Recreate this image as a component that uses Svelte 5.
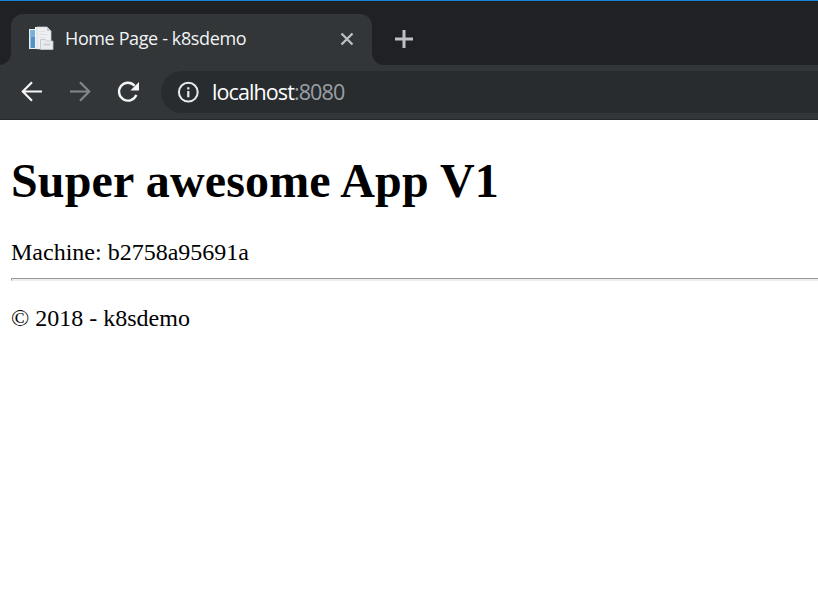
<script>
  const title = 'Home Page - k8sdemo';
  const host = 'localhost';
  const port = ':8080';
</script>

<div class="window">
  <div class="tabstrip">
    <div class="tab">
      <svg class="favicon" width="26" height="26" viewBox="0 0 26 26">
        <path d="M1 3h14v20H1z" fill="#eceef0" />
        <path d="M2.500 4h4.500v18H2.500z" fill="#4f93c8" />
        <path d="M2.500 4h4.500v7H2.500z" fill="#78b0d8" />
        <path d="M7 1h12v21H7z" fill="#f4f5f6" />
        <path d="M9 1h10l4 4v18H9z" fill="#eeeff2" stroke="#d0d3d8" stroke-width=".7" />
        <path d="M19 1v4h4z" fill="#c4c8ce" />
        <path d="M11 5.500h6M11 8.500h9M11 11.500h6" stroke="#dfe1e7" fill="none" />
        <path d="M12.500 13.500h5l1 1.500h6.500v8.500H12.500z" fill="#e9ebee" stroke="#bfc3c9" stroke-width=".8" />
        <path d="M15.500 18.500h7" stroke="#c7ccd4" stroke-width="1.6" />
      </svg>
      <span class="title">{title}</span>
      <svg class="close" width="14" height="14" viewBox="0 0 14 14">
        <path d="M1.500 1.500l11 11M12.500 1.500l-11 11" stroke="#bdc1c6" stroke-width="2.300" />
      </svg>
    </div>
    <svg class="new-tab" width="20" height="20" viewBox="0 0 20 20">
      <path d="M10 1v18M1 10h18" stroke="#bdc1c6" stroke-width="3" />
    </svg>
  </div>

  <div class="toolbar">
    <svg width="22" height="22" viewBox="0 0 22 22">
      <path d="M21 10.500H2.500M11 1.300L1.800 10.500l9.200 9.200" stroke="#f5f5f5" stroke-width="2.200" fill="none" />
    </svg>
    <svg width="22" height="22" viewBox="0 0 22 22">
      <path d="M1 10.500h18.500M11 1.300l9.200 9.200-9.200 9.200" stroke="#84878a" stroke-width="2.200" fill="none" />
    </svg>
    <svg class="reload" width="22" height="22" viewBox="0 0 22 22">
      <path d="M19.300 13.800A8.900 8.900 0 1 1 17.600 4.800" stroke="#f5f5f5" stroke-width="2.400" fill="none" />
      <path d="M22 1v8.600h-8.600z" fill="#f5f5f5" />
    </svg>
    <div class="omnibox">
      <svg width="22" height="22" viewBox="0 0 22 22">
        <circle cx="11.300" cy="11.200" r="9.400" stroke="#e8eaed" stroke-width="2" fill="none" />
        <path d="M11.300 6.200v2.200M11.300 9.900v6.400" stroke="#e8eaed" stroke-width="2.200" />
      </svg>
      <span class="url">{host}<span class="port">{port}</span></span>
    </div>
  </div>

  <main>
    <h1>Super awesome App V1</h1>
    <p class="machine">Machine: b2758a95691a</p>
    <hr />
    <footer><p>© 2018 - k8sdemo</p></footer>
  </main>
</div>

<style>
  :global(body) {
    margin: 0;
    background: #fff;
    overflow: hidden;
  }
  .window {
    width: 100%;
    height: 610px;
    background: #fff;
  }
  svg {
    display: block;
    flex: none;
  }
  .tabstrip {
    box-sizing: border-box;
    height: 65px;
    padding: 13px 0 0 11px;
    border-top: 1px solid #1583d8;
    background: #202124;
    display: flex;
  }
  .tab {
    position: relative;
    box-sizing: border-box;
    width: 361px;
    height: 51px;
    padding: 0 18px 1px 17px;
    border-radius: 12px 12px 0 0;
    background: #323639;
    display: flex;
    align-items: center;
  }
  .tab::before,
  .tab::after {
    content: '';
    position: absolute;
    bottom: 0;
    width: 12px;
    height: 12px;
  }
  .tab::before {
    right: 100%;
    background: radial-gradient(circle at 0 0, #202124 11.5px, #323639 12.5px);
  }
  .tab::after {
    left: 100%;
    background: radial-gradient(circle at 100% 0, #202124 11.5px, #323639 12.5px);
  }
  .title {
    flex: 1;
    margin-left: 11px;
    padding-bottom: 2px;
    font: 18px/24px 'Open Sans', sans-serif;
    letter-spacing: -0.38px;
    white-space: nowrap;
    color: #f1f3f4;
  }
  .new-tab {
    margin: 15px 0 0 22px;
  }
  .toolbar {
    box-sizing: border-box;
    height: 55px;
    padding-left: 21px;
    border-bottom: 1px solid #252729;
    background: #323639;
    display: flex;
    align-items: center;
    gap: 26px;
  }
  .omnibox {
    box-sizing: border-box;
    flex: 1;
    height: 42px;
    margin-left: -4px;
    padding-left: 16px;
    border-radius: 21px 0 0 21px;
    background: #282c2f;
    display: flex;
    align-items: center;
    gap: 13px;
  }
  .url {
    font: 21.5px/28px 'Open Sans', sans-serif;
    letter-spacing: -0.9px;
    color: #fff;
    white-space: nowrap;
  }
  .port {
    color: #9aa0a6;
  }
  main {
    padding: 0 0 0 11px;
    font: 24px/27px 'Liberation Serif', 'Times New Roman', serif;
    color: #000;
    display: flow-root;
  }
  h1 {
    margin: 33px 0 0;
    font-size: 48px;
    line-height: 55px;
    letter-spacing: 0.15px;
    white-space: nowrap;
  }
  .machine {
    margin: 31px 0 0;
  }
  hr {
    height: 1px;
    margin: 12px 0 0;
    border: solid #9a9a9a;
    border-width: 1px 0 0 1px;
    background: #eee;
    border-bottom: 1px solid #eee;
  }
  footer p {
    margin: 24px 0 0;
  }
</style>
